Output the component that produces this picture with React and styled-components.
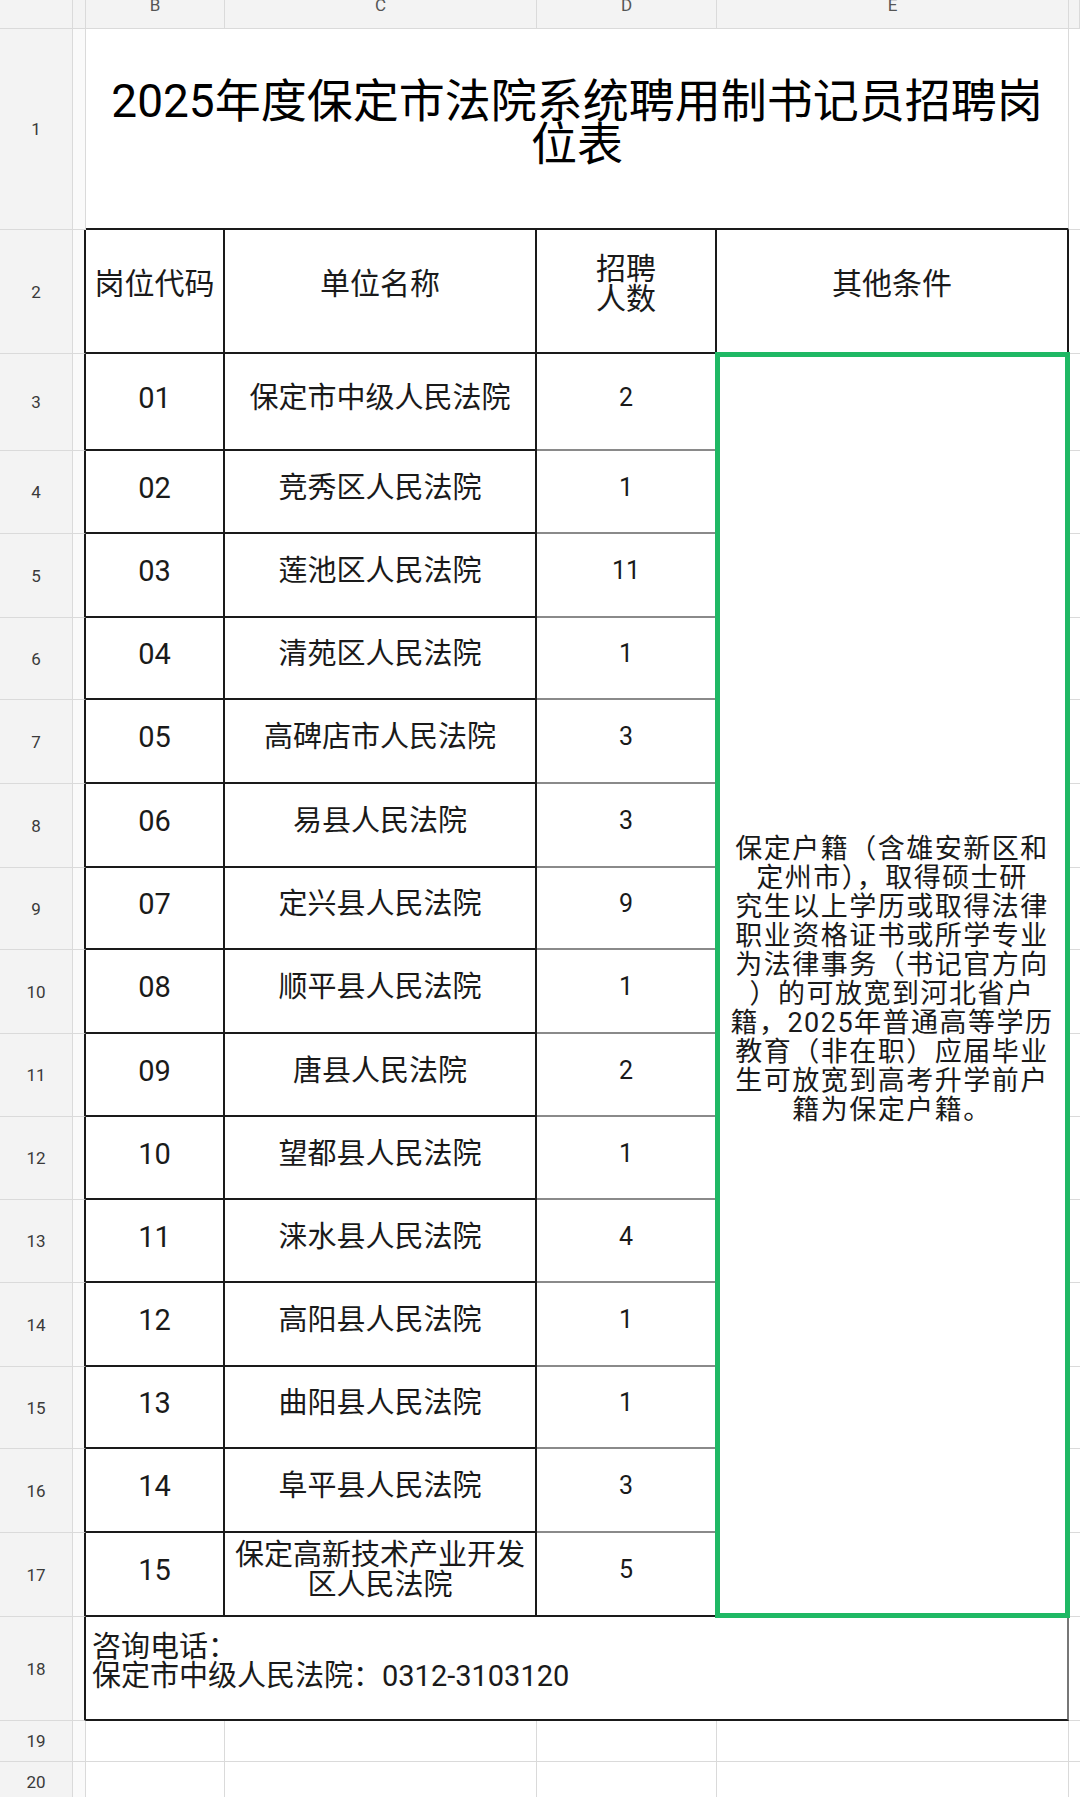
import styled, { createGlobalStyle, css } from 'styled-components';

const GlobalStyle = createGlobalStyle`
  html, body {
    margin: 0;
    padding: 0;
    background: #ffffff;
    overflow: hidden;
  }
  body {
    font-family: Roboto, "Noto Sans CJK SC", sans-serif;
    color: #111;
  }
`;

const GRID = '#dadada';
const INK = '#1a1a1a';
const SOFT = '#8a8a8a';

const courts = [
  ['01', '保定市中级人民法院', 2],
  ['02', '竞秀区人民法院', 1],
  ['03', '莲池区人民法院', 11],
  ['04', '清苑区人民法院', 1],
  ['05', '高碑店市人民法院', 3],
  ['06', '易县人民法院', 3],
  ['07', '定兴县人民法院', 9],
  ['08', '顺平县人民法院', 1],
  ['09', '唐县人民法院', 2],
  ['10', '望都县人民法院', 1],
  ['11', '涞水县人民法院', 4],
  ['12', '高阳县人民法院', 1],
  ['13', '曲阳县人民法院', 1],
  ['14', '阜平县人民法院', 3],
  ['15', '保定高新技术产业开发\n区人民法院', 5],
];

const rowHeights = [97, 83, 84, 82, 84, 84, 82, 84, 83, 83, 83, 84, 82, 84, 84];

const noteLines = [
  '保定户籍（含雄安新区和',
  '定州市），取得硕士研',
  '究生以上学历或取得法律',
  '职业资格证书或所学专业',
  '为法律事务（书记官方向',
  '）的可放宽到河北省户',
  '籍，2025年普通高等学历',
  '教育（非在职）应届毕业',
  '生可放宽到高考升学前户',
  '籍为保定户籍。',
];

const Sheet = styled.div`
  display: grid;
  width: 1080px;
  grid-template-columns: 73px 13px 139px 312px 180px 352px 11px;
  grid-template-rows: 29px 201px 124px ${rowHeights.map((h) => `${h}px`).join(' ')} 104px 41px 41px;
`;

const place = css`
  grid-row: ${(p) => p.$row} / span ${(p) => p.$rspan || 1};
  grid-column: ${(p) => p.$col} / span ${(p) => p.$cspan || 1};
  box-sizing: border-box;
  min-width: 0;
`;

const ColHead = styled.div`
  ${place};
  background: #f3f3f3;
  border-right: 1px solid ${GRID};
  border-bottom: 1px solid ${GRID};
  display: flex;
  justify-content: center;
  align-items: flex-start;
  overflow: hidden;
  font-size: 17px;
  line-height: 17px;
  color: #555;

  span {
    margin-top: -3px;
  }
`;

const RowHead = styled.div`
  ${place};
  background: #f3f3f3;
  border-right: 1px solid ${GRID};
  border-bottom: 1px solid ${GRID};
  display: flex;
  align-items: center;
  justify-content: center;
  font-size: 17px;
  color: #3a3a3a;
`;

const GapCell = styled.div`
  ${place};
  background: #fafafa;
  border-right: ${(p) => (p.$edge ? `2px solid ${INK}` : `1px solid ${GRID}`)};
  border-bottom: 1px solid ${GRID};
`;

const BlankCell = styled.div`
  ${place};
  border-right: ${(p) => (p.$noRight ? 'none' : `1px solid ${GRID}`)};
  border-bottom: 1px solid ${GRID};
`;

const TitleCell = styled.div`
  ${place};
  border-right: 1px solid ${GRID};
  border-bottom: 2px solid ${INK};
  display: flex;
  align-items: center;
  justify-content: center;
  padding-bottom: 12px;
  text-align: center;
  font-size: 46px;
  line-height: 43px;
  color: #000;
`;

const Cell = styled.div`
  ${place};
  border-right: 2px solid ${INK};
  border-bottom: 2px solid ${(p) => p.$bottom || INK};
  display: flex;
  align-items: center;
  justify-content: center;
  padding-bottom: ${(p) => p.$lift || 8}px;
  text-align: center;
  white-space: pre-line;
  font-size: ${(p) => p.$size || 29}px;
  line-height: ${(p) => p.$lh || 30}px;
  color: ${INK};
`;

const NoteCell = styled.div`
  ${place};
  position: relative;
  border-right: 2px solid ${INK};
  display: flex;
  flex-direction: column;
  align-items: center;
  justify-content: center;
  padding-bottom: 12px;
  font-size: 27px;
  line-height: 29px;
  letter-spacing: 1.5px;
  color: ${INK};

  &::after {
    content: '';
    position: absolute;
    top: -2px;
    left: -2px;
    right: -3px;
    bottom: -1px;
    border: 5px solid #1fb864;
    z-index: 2;
  }
`;

const NoteLine = styled.span`
  display: block;
  white-space: nowrap;
`;

const ContactCell = styled.div`
  ${place};
  border-right: 2px solid #777;
  border-bottom: 2px solid ${INK};
  display: flex;
  flex-direction: column;
  justify-content: center;
  padding: 0 0 12px 6px;
  font-size: 29px;
  line-height: 29px;
  color: ${INK};
`;

const sheetRows = Array.from({ length: 20 }, (_, i) => i + 1);

function CourtRow({ row, code, name, count, last }) {
  return (
    <>
      <Cell $row={row} $col={3}>{code}</Cell>
      <Cell $row={row} $col={4}>{name}</Cell>
      <Cell $row={row} $col={5} $size={25} $bottom={last ? INK : SOFT}>
        {count}
      </Cell>
    </>
  );
}

export default function App() {
  return (
    <>
      <GlobalStyle />
      <Sheet>
        {/* column header strip */}
        <ColHead $row={1} $col={1} />
        <ColHead $row={1} $col={2} />
        {['B', 'C', 'D', 'E'].map((l, i) => (
          <ColHead key={l} $row={1} $col={3 + i}>
            <span>{l}</span>
          </ColHead>
        ))}
        <ColHead $row={1} $col={7} />

        {/* row numbers, hidden column A, column F */}
        {sheetRows.map((n) => (
          <RowHead key={`r${n}`} $row={n + 1} $col={1}>
            {n}
          </RowHead>
        ))}
        {sheetRows.map((n) => (
          <GapCell key={`a${n}`} $row={n + 1} $col={2} $edge={n >= 2 && n <= 18} />
        ))}
        {sheetRows.map((n) => (
          <BlankCell key={`f${n}`} $row={n + 1} $col={7} $noRight />
        ))}

        <TitleCell $row={2} $col={3} $cspan={4}>
          2025年度保定市法院系统聘用制书记员招聘岗
          <br />
          位表
        </TitleCell>

        <Cell $row={3} $col={3} $lift={14} $size={30}>岗位代码</Cell>
        <Cell $row={3} $col={4} $lift={14} $size={30}>单位名称</Cell>
        <Cell $row={3} $col={5} $lift={14} $size={30}>{'招聘\n人数'}</Cell>
        <Cell $row={3} $col={6} $lift={14} $size={30}>其他条件</Cell>

        {courts.map(([code, name, count], i) => (
          <CourtRow key={code} row={i + 4} code={code} name={name} count={count} last={i === courts.length - 1} />
        ))}

        <NoteCell $row={4} $col={6} $rspan={15}>
          {noteLines.map((l) => (
            <NoteLine key={l}>{l}</NoteLine>
          ))}
        </NoteCell>

        <ContactCell $row={19} $col={3} $cspan={4}>
          <div>咨询电话：</div>
          <div>保定市中级人民法院：0312-3103120</div>
        </ContactCell>

        {[20, 21].map((r) =>
          [3, 4, 5, 6].map((c) => <BlankCell key={`b${r}-${c}`} $row={r} $col={c} />)
        )}
      </Sheet>
    </>
  );
}
